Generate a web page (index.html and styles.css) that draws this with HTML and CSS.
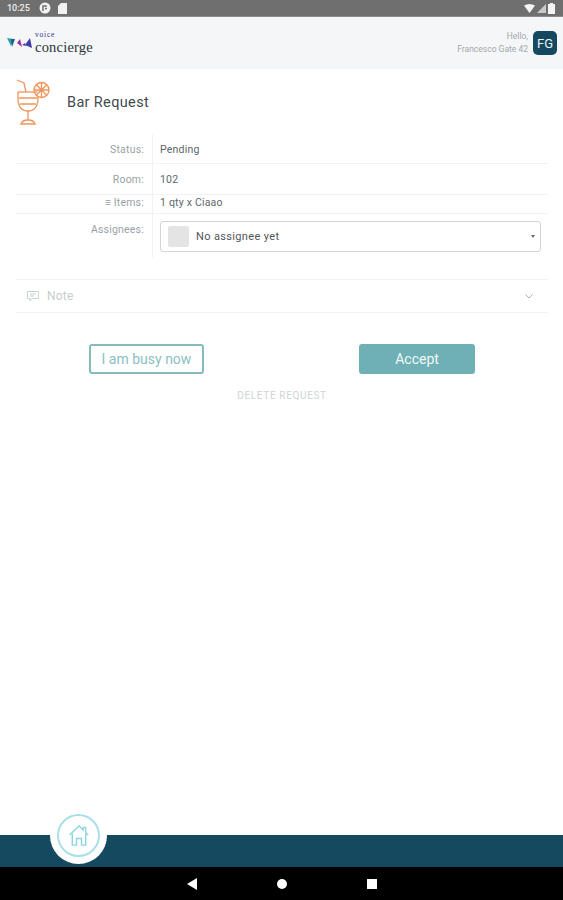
FILE: index.html
```html
<!DOCTYPE html>
<html lang="en">
<head>
    <meta charset="UTF-8">
    <meta name="viewport" content="width=device-width, initial-scale=1.0">
    <title>Bar Request</title>
    <link rel="stylesheet" href="styles.css">
</head>
<body>
    <div class="status-bar">
        <div class="status-left">
            <span class="clock">10:25</span>
            <svg class="status-icon" width="12" height="12" viewBox="0 0 12 12"><circle cx="6" cy="6" r="5.5" fill="#f2f2f2"/><path d="M4 9V4h4M6 6.5h2" fill="none" stroke="#707070" stroke-width="1.5"/></svg>
            <svg class="status-icon" width="9" height="11" viewBox="0 0 9 11"><path d="M3 0h6v11H0V3z" fill="#f2f2f2"/></svg>
        </div>
        <div class="status-right">
            <svg width="11" height="9" viewBox="0 0 11 9"><path d="M0 1.5Q5.500-1.500 11 1.500L5.500 9z" fill="#f5f5f5"/></svg>
            <svg width="9" height="9" viewBox="0 0 9 9"><path d="M9 0v9H0z" fill="#c9c9c9"/></svg>
            <svg width="7" height="11" viewBox="0 0 7 11"><path d="M2 0h3v1h2v10H0V1h2z" fill="#f5f5f5"/></svg>
        </div>
    </div>

    <header class="app-header">
        <div class="logo">
            <svg width="25" height="13" viewBox="0 0 25 13">
                <path d="M0 1l7 1-3 7z" fill="#2a9fb0"/>
                <path d="M4 2l4 0-3 8z" fill="#1d5f86"/>
                <path d="M10 6l3-4 2 8z" fill="#a02f9e"/>
                <path d="M15 8l3-2 1 3z" fill="#5a3fb0"/>
                <path d="M18 8l5-7 2 10z" fill="#3d3ea8"/>
            </svg>
            <div class="logo-text">
                <span class="logo-voice">voice</span>
                <span class="logo-name">concierge</span>
            </div>
        </div>
        <div class="user">
            <div class="user-text">
                <span>Hello,</span>
                <span>Francesco Gate 42</span>
            </div>
            <div class="avatar">FG</div>
        </div>
    </header>

    <main class="content">
        <div class="title-row">
            <svg class="cocktail" width="36" height="46" viewBox="0 0 36 46" fill="none" stroke="#f0945a" stroke-width="1.300">
                <path d="M1 1l7 3 2 9"/>
                <path d="M2 13h19.500"/>
                <path d="M2 13v6c0 9 4 13 10 13s10-4 10-13v-2"/>
                <path d="M3 19h18M4 25h16"/>
                <path d="M12 32v9"/>
                <path d="M5 45c1-3 4-4 7-4s6 1 7 4z"/>
                <circle cx="25.500" cy="11" r="7.500"/>
                <path d="M25.500 3.500v15M18 11h15M20 5.500l11 11M31 5.500l-11 11"/>
            </svg>
            <h1>Bar Request</h1>
        </div>

        <div class="details">
            <div class="row row-status">
                <div class="row-label">Status:</div>
                <div class="row-value">Pending</div>
            </div>
            <div class="row row-room">
                <div class="row-label">Room:</div>
                <div class="row-value">102</div>
            </div>
            <div class="row row-items">
                <div class="row-label">≡ Items:</div>
                <div class="row-value">1 qty x Ciaao</div>
            </div>
            <div class="row row-assign">
                <div class="row-label">Assignees:</div>
                <div class="row-value">
                    <div class="select">
                        <span class="select-thumb"></span>
                        <span class="select-text">No assignee yet</span>
                        <span class="select-caret"></span>
                    </div>
                </div>
            </div>
        </div>

        <div class="note">
            <svg width="12" height="12" viewBox="0 0 12 12" fill="none" stroke="#c9d0d0"><path d="M.5 1.500h11v7H5l-2 2.500V8.500H.5zM3 4h6M3 6h4"/></svg>
            <span class="note-label">Note</span>
            <svg class="note-chevron" width="8" height="5" viewBox="0 0 8 5" fill="none" stroke="#a9b2b2"><path d="M.5.5L4 4 7.500.5"/></svg>
        </div>

        <div class="actions">
            <button class="btn btn-outline">I am busy now</button>
            <button class="btn btn-fill">Accept</button>
        </div>
        <div class="delete">DELETE REQUEST</div>
    </main>

    <footer class="bottom-bar">
        <div class="home-btn">
            <div class="home-ring">
                <svg width="22" height="21" viewBox="0 0 24 25" fill="none" stroke="#8fd6e0" stroke-width="1.700">
                    <path d="M1 12L12 1l5 5V3h3v6l3 3"/>
                    <path d="M4 10v14h5v-8h6v8h5V10"/>
                </svg>
            </div>
        </div>
    </footer>
    <nav class="nav-bar">
        <span class="nav-back"></span>
        <span class="nav-home"></span>
        <span class="nav-recent"></span>
    </nav>
</body>
</html>
```

FILE: styles.css
```css
* {
    box-sizing: border-box;
    margin: 0;
    padding: 0;
}

body {
    font-family: 'Roboto', sans-serif;
    background-color: white;
    color: #47545a;
    width: 563px;
    height: 900px;
    display: flex;
    flex-direction: column;
    overflow: hidden;
}

.status-bar {
    height: 17px;
    background-color: #6f6f6f;
    border-bottom: 1px solid #8c8c8c;
    display: flex;
    align-items: center;
    justify-content: space-between;
    padding: 0 8px 0 7px;
}

.status-left, .status-right {
    display: flex;
    align-items: center;
}

.status-right {
    gap: 2px;
}

.clock {
    font-size: 9px;
    font-weight: 500;
    color: #ececec;
    width: 32px;
}

.status-icon {
    margin-right: 7px;
}

.app-header {
    height: 52px;
    background-color: #f4f6f8;
    display: flex;
    align-items: center;
    justify-content: space-between;
    padding: 0 6px 0 7px;
}

.logo {
    display: flex;
    align-items: center;
    gap: 3px;
}

.logo-text {
    display: flex;
    flex-direction: column;
    font-family: 'Liberation Serif', serif;
}

.logo-voice {
    font-size: 7.500px;
    color: #3b2f8f;
    letter-spacing: 0.8px;
}

.logo-name {
    font-size: 14.500px;
    color: #2c3338;
    letter-spacing: 0.2px;
}

.user {
    display: flex;
    align-items: center;
    gap: 5px;
}

.user-text {
    display: flex;
    flex-direction: column;
    align-items: flex-end;
    font-size: 8.500px;
    line-height: 13px;
    color: #a3a9ad;
}

.avatar {
    width: 24px;
    height: 24px;
    border-radius: 5px;
    background-color: #14495f;
    color: #eef4f6;
    font-size: 13px;
    display: flex;
    align-items: center;
    justify-content: center;
}

.content {
    flex: 1;
    padding: 0 15px 0 16px;
}

.title-row {
    height: 65px;
    display: flex;
    align-items: center;
    gap: 15px;
    padding-top: 1px;
}

.title-row h1 {
    font-size: 14.500px;
    font-weight: 400;
    color: #444b4f;
    letter-spacing: 0.35px;
    padding-top: 1px;
}

.details {
    font-size: 10.500px;
    letter-spacing: 0.2px;
}

.row {
    display: flex;
    border-bottom: 1px solid #f1f2f2;
}

.row-label {
    width: 137px;
    padding-right: 8px;
    text-align: right;
    color: #9aa2a6;
    border-right: 1px solid #f1f2f2;
    flex-shrink: 0;
}

.row-value {
    flex: 1;
    padding-left: 7px;
    color: #5b676c;
}

.row-status {
    height: 30px;
    line-height: 31px;
}

.row-room {
    height: 31px;
    line-height: 31px;
}

.row-items {
    height: 19px;
    line-height: 16px;
}

.row-assign {
    height: 44px;
    border-bottom: none;
}

.row-assign .row-label {
    padding-top: 10px;
    line-height: 12px;
}

.row-assign .row-value {
    padding-top: 7px;
    padding-right: 7px;
}

.select {
    height: 31px;
    border: 1px solid #d4d4d4;
    border-radius: 3px;
    display: flex;
    align-items: center;
    padding: 0 5px 0 7px;
}

.select-thumb {
    width: 21px;
    height: 21px;
    background-color: #e4e4e4;
    border-radius: 2px;
    margin-right: 7px;
}

.select-text {
    flex: 1;
    font-size: 11px;
    letter-spacing: 0.35px;
    color: #50565a;
}

.select-caret {
    width: 0;
    height: 0;
    border-left: 2.500px solid transparent;
    border-right: 2.500px solid transparent;
    border-top: 3px solid #6a6a6a;
}

.note {
    height: 34px;
    margin-top: 21px;
    border-top: 1px solid #f1f2f2;
    border-bottom: 1px solid #f1f2f2;
    display: flex;
    align-items: center;
    padding: 0 15px 0 11px;
    gap: 8px;
}

.note-label {
    font-size: 12px;
    letter-spacing: 0.2px;
    color: #c7cdcd;
    flex: 1;
}

.actions {
    display: flex;
    justify-content: space-between;
    padding: 31px 73px 0 73px;
}

.btn {
    height: 30px;
    font-family: inherit;
    font-size: 14px;
    border-radius: 3px;
    border: 2px solid #6fb0b5;
}

.btn-outline {
    width: 115px;
    background-color: white;
    border-color: #86bcc0;
    color: #8abfc3;
}

.btn-fill {
    width: 116px;
    background-color: #6fb0b5;
    color: #f2f8f8;
}

.delete {
    text-align: center;
    font-size: 10px;
    letter-spacing: 0.65px;
    color: #cfd4d4;
    margin-top: 16px;
}

.bottom-bar {
    height: 32px;
    background-color: #14495f;
    position: relative;
    flex-shrink: 0;
}

/* sits half over the bar */
.home-btn {
    position: absolute;
    left: 50px;
    top: -28px;
    width: 57px;
    height: 57px;
    border-radius: 50%;
    background-color: white;
    display: flex;
    align-items: center;
    justify-content: center;
}

.home-ring {
    width: 43px;
    height: 43px;
    border-radius: 50%;
    border: 2px solid #a8e0e8;
    display: flex;
    align-items: center;
    justify-content: center;
}

.nav-bar {
    height: 33px;
    background-color: black;
    flex-shrink: 0;
    display: flex;
    align-items: center;
    justify-content: center;
    gap: 80px;
    padding-left: 1px;
}

.nav-back {
    width: 0;
    height: 0;
    border-top: 6px solid transparent;
    border-bottom: 6px solid transparent;
    border-right: 10px solid white;
}

.nav-home {
    width: 10px;
    height: 10px;
    border-radius: 50%;
    background-color: white;
}

.nav-recent {
    width: 10px;
    height: 10px;
    background-color: white;
}
```
